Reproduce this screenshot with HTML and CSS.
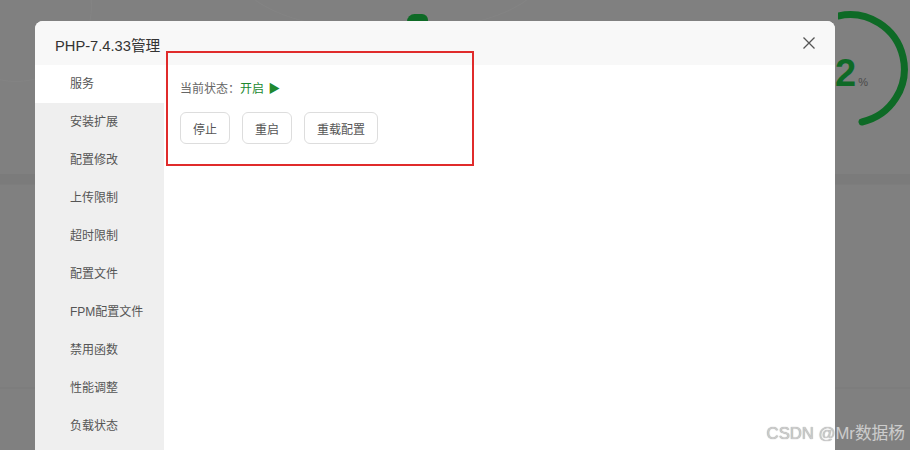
FILE: index.html
```html
<!DOCTYPE html>
<html lang="zh-CN">
<head>
    <meta charset="UTF-8">
    <title>PHP-7.4.33管理</title>
    <link rel="stylesheet" href="styles.css">
</head>
<body>
    <div class="backdrop">
        <div class="band top-band"></div>
        <div class="band"></div>
        <div class="band low-band"></div>
        <div class="band"></div>
        <span class="ring ring-a"></span>
        <span class="ring ring-b"></span>
        <span class="arc-tip"></span>
        <div class="gauge">
            <svg width="90" height="130" viewBox="0 0 90 130">
                <path d="M 0 16 A 54 54 0 0 1 24 122" fill="none" stroke="#0e6a26" stroke-width="7" stroke-linecap="round"/>
            </svg>
            <div class="gauge-num">2<span>%</span></div>
        </div>
    </div>

    <div class="dialog">
        <div class="dialog-head">
            <span class="dialog-title">PHP-7.4.33管理</span>
            <span class="close">
                <svg width="12" height="12" viewBox="0 0 12 12">
                    <path d="M0.5 0.5 L11.5 11.5 M11.5 0.5 L0.5 11.5" stroke="#555" stroke-width="1.3"/>
                </svg>
            </span>
        </div>
        <div class="dialog-body">
            <ul class="side-menu">
                <li class="active">服务</li>
                <li>安装扩展</li>
                <li>配置修改</li>
                <li>上传限制</li>
                <li>超时限制</li>
                <li>配置文件</li>
                <li>FPM配置文件</li>
                <li>禁用函数</li>
                <li>性能调整</li>
                <li>负载状态</li>
            </ul>
            <div class="panel">
                <div class="status">
                    当前状态：<span class="on">开启 <span class="play">▶</span></span>
                </div>
                <div class="actions">
                    <button>停止</button>
                    <button>重启</button>
                    <button>重载配置</button>
                </div>
            </div>
        </div>
        <div class="mark"></div>
    </div>

    <div class="watermark">CSDN @Mr数据杨</div>
</body>
</html>
```

FILE: styles.css
```css
body {
    margin: 0;
    width: 910px;
    height: 450px;
    overflow: hidden;
    background: #808080;
    font-family: "Liberation Sans", "Noto Sans CJK SC", sans-serif;
    position: relative;
}
.backdrop {
    padding-top: 174px;
}
.band {
    height: 10px;
    background: #7b7b7b;
}
.band + .band {
    height: 1px;
    background: #7d7d7d;
}
.low-band {
    margin-top: 202px;
    height: 12px;
}
.ring {
    position: absolute;
    border: 1px solid #848484;
    border-radius: 50%;
}
.ring-a {
    left: -60px;
    top: -70px;
    width: 150px;
    height: 150px;
}
.ring-b {
    left: 240px;
    top: -80px;
    width: 300px;
    height: 110px;
}
.arc-tip {
    position: absolute;
    left: 407px;
    top: 14px;
    width: 21px;
    height: 9px;
    background: #0e6a26;
    border-radius: 10px 8px 2px 2px;
}
.gauge {
    position: absolute;
    left: 835px;
    top: 0;
}
.gauge svg {
    position: absolute;
    left: 3px;
    top: 0;
}
.gauge-num {
    position: absolute;
    left: 0;
    top: 52px;
    font-size: 38px;
    font-weight: bold;
    color: #0e6a26;
}
.gauge-num span {
    font-size: 11px;
    font-weight: normal;
    color: #4a4a4a;
    margin-left: 2px;
}
.dialog {
    position: absolute;
    left: 35px;
    top: 21px;
    width: 800px;
    height: 429px;
    background: #fff;
    border-radius: 8px 8px 0 0;
    overflow: hidden;
}
.dialog-head {
    height: 44px;
    background: #f8f8f8;
    display: flex;
    align-items: center;
    justify-content: space-between;
    padding: 0 20px;
}
.dialog-title {
    font-size: 14.7px;
    color: #333;
    padding-top: 2px;
}
.close {
    display: flex;
}
.dialog-body {
    display: flex;
    height: 385px;
}
.side-menu {
    list-style: none;
    margin: 0;
    padding: 0;
    width: 129px;
    background: #efefef;
}
.side-menu li {
    height: 38px;
    line-height: 38px;
    padding-left: 35px;
    font-size: 12px;
    color: #555;
}
.side-menu li.active {
    background: #fff;
}
.panel {
    flex: 1;
    padding: 14px 16px;
}
.status {
    font-size: 12px;
    color: #666;
    line-height: 20px;
}
.on {
    color: #20882f;
}
.play {
    font-size: 12px;
    margin-left: 1px;
}
.actions {
    display: flex;
    gap: 12px;
    margin-top: 13px;
}
.actions button {
    height: 32px;
    padding: 0 12px;
    background: #fff;
    border: 1px solid #ddd;
    border-radius: 6px;
    font-family: inherit;
    font-size: 12px;
    color: #555;
}
.mark {
    position: absolute;
    left: 131px;
    top: 30px;
    width: 304px;
    height: 111px;
    border: 2px solid #e02b2b;
}
.watermark {
    position: absolute;
    right: 5px;
    bottom: 6px;
    font-size: 16.7px;
    color: #cccccc;
    text-shadow: 0 0 1px #8a8a8a;
}
```
